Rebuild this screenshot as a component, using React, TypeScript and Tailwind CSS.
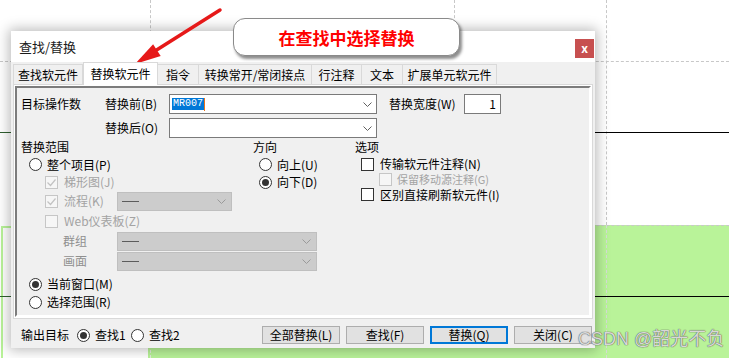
import React from 'react';

const Radio = ({ checked = false }: { checked?: boolean }) => (
  <span className="flex h-[13px] w-[13px] shrink-0 items-center justify-center rounded-full border border-[#333333] bg-white">
    {checked && <span className="h-[7px] w-[7px] rounded-full bg-[#333333]" />}
  </span>
);

const Check = ({ checked = false, disabled = false }: { checked?: boolean; disabled?: boolean }) => (
  <span
    className={`flex h-[13px] w-[13px] shrink-0 items-center justify-center border ${
      disabled ? 'border-[#c6c6c6] bg-[#f6f6f6]' : 'border-[#333333] bg-white'
    }`}
  >
    {checked && (
      <svg width="11" height="11" viewBox="0 0 11 11">
        <polyline points="1.5,5.5 4.5,8.5 9.5,2.5" fill="none" stroke={disabled ? '#c2c2c2' : '#333'} strokeWidth="1.2" />
      </svg>
    )}
  </span>
);

const Chevron = ({ color }: { color: string }) => (
  <svg width="9" height="5" viewBox="0 0 9 5">
    <polyline points="0.5,0.5 4.5,4.5 8.5,0.5" fill="none" stroke={color} strokeWidth="1" />
  </svg>
);

const Combo = ({ children }: { children?: React.ReactNode }) => (
  <div className="flex h-[20px] w-[208px] shrink-0 items-center justify-between border border-[#7a7a7a] bg-white pl-[2px] pr-[4px]">
    <div className="flex items-center">{children}</div>
    <Chevron color="#606060" />
  </div>
);

const DisabledSelect = ({ wide = false }: { wide?: boolean }) => (
  <div
    className={`flex h-[19px] shrink-0 items-center justify-between border border-[#bfbfbf] bg-[#cccccc] pl-[4px] pr-[5px] ${
      wide ? 'w-[200px]' : 'w-[115px]'
    }`}
  >
    <span className="h-[1px] w-[17px] bg-[#5c5c5c]" />
    <Chevron color="#9a9a9a" />
  </div>
);

const tabs = [
  { label: '查找软元件', w: 'w-[70px]' },
  { label: '替换软元件', w: 'w-[75px]', active: true },
  { label: '指令', w: 'w-[41px]' },
  { label: '转换常开/常闭接点', w: 'w-[113px]' },
  { label: '行注释', w: 'w-[50px]' },
  { label: '文本', w: 'w-[41px]' },
  { label: '扩展单元软元件', w: 'w-[94px]' },
];

const Button = ({ label, focused = false }: { label: string; focused?: boolean }) => (
  <div
    className={`flex h-[18px] w-[78px] items-center justify-center bg-[#e1e1e1] ${
      focused ? 'border-2 border-[#0078d7]' : 'border border-[#adadad]'
    }`}
  >
    {label}
  </div>
);

const App: React.FC = () => {
  return (
    <div className="relative h-[358px] w-[729px] overflow-hidden bg-white font-['Noto_Sans_CJK_SC',sans-serif] text-[12px] leading-none text-black">
      {/* canvas behind the dialog */}
      <div className="absolute left-[148px] top-[225px] h-[133px] w-[581px] border-t border-dashed border-[#c8c8c8] bg-[#b9f399]" />
      <div className="absolute left-[1px] top-[226px] h-[140px] w-[147px] border-l-2 border-t-2 border-[#b9f399]" />
      <div className="absolute left-0 top-[61px] w-[729px] border-t border-dashed border-[#c8c8c8]" />
      <div className="absolute left-[150px] top-0 h-[225px] border-l border-dashed border-[#c8c8c8]" />
      <div className="absolute left-[150px] top-[225px] h-[133px] border-l border-dashed border-[#e2ecdc]" />
      <div className="absolute left-[454px] top-0 h-[225px] border-l border-dashed border-[#c8c8c8]" />
      <div className="absolute left-[606px] top-0 h-[225px] border-l border-dashed border-[#c8c8c8]" />
      <div className="absolute left-[606px] top-[225px] h-[133px] border-l border-dashed border-[#d6dcd6]" />
      <div className="absolute left-0 top-[132px] h-[1px] w-[12px] bg-[#2f5f2f]" />
      <div className="absolute left-[594px] top-[132px] h-[1px] w-[135px] bg-black" />
      <div className="absolute left-0 top-[296px] h-[1px] w-[12px] bg-[#2f5f2f]" />
      <div className="absolute left-[594px] top-[296px] h-[1px] w-[135px] bg-black" />

      {/* dialog */}
      <div className="absolute left-[11px] top-[31px] flex h-[317px] w-[584px] flex-col bg-[#f0f0f0] shadow-[0_0_12px_2px_rgba(0,0,0,0.28)]">
        {/* title bar */}
        <div className="flex h-[31px] shrink-0 justify-between bg-white">
          <div className="flex items-center pl-[8px] text-[13px] text-[#1a1a1a]">查找/替换</div>
          <div className="mr-[1px] mt-[8px] flex h-[19px] w-[19px] items-center justify-center bg-[#c75050] pb-[2px] text-[12px] font-bold text-white">
            x
          </div>
        </div>

        {/* tab strip */}
        <div className="relative z-10 flex h-[22px] shrink-0 items-end pl-[2px]">
          {tabs.map((t) =>
            t.active ? (
              <div
                key={t.label}
                className={`-mb-[1px] flex h-[23px] items-center justify-center border border-b-0 border-[#d9d9d9] bg-white ${t.w}`}
              >
                {t.label}
              </div>
            ) : (
              <div
                key={t.label}
                className={`flex h-[20px] items-center justify-center border border-b-0 border-l-0 border-[#d9d9d9] bg-[#f0f0f0] first:border-l ${t.w}`}
              >
                {t.label}
              </div>
            )
          )}
        </div>

        {/* tab page */}
        <div className="mx-[2px] flex h-[235px] shrink-0 border border-[#d9d9d9] bg-white p-[1px]">
          <div className="flex flex-1 flex-col border-b-2 border-l-2 border-r-2 border-t-2 border-b-white border-l-[#7c7c7c] border-r-white border-t-[#7c7c7c] bg-[#f0f0f0] pl-[4px] pt-[6px]">
            {/* row 1 */}
            <div className="flex h-[20px] items-center">
              <span className="w-[84px] shrink-0">目标操作数</span>
              <span className="w-[64px] shrink-0">替换前(B)</span>
              <Combo>
                <span className="relative flex h-[12px] items-center bg-[#0078d7] px-[1px] font-['Liberation_Mono',monospace] text-[10px] text-white">
                  MR007
                </span>
                <span className="h-[13px] w-[1px] bg-[#e8731a]" />
              </Combo>
              <span className="ml-[12px] w-[75px] shrink-0">替换宽度(W)</span>
              <div className="flex h-[20px] w-[37px] items-center justify-end border border-[#7a7a7a] bg-white pr-[4px]">1</div>
            </div>
            {/* row 2 */}
            <div className="mt-[4px] flex h-[20px] items-center">
              <span className="w-[84px] shrink-0" />
              <span className="w-[64px] shrink-0">替换后(O)</span>
              <Combo />
            </div>

            <div className="flex">
              {/* replace range */}
              <div className="flex w-[232px] shrink-0 flex-col">
                <div className="flex h-[18px] items-center">替换范围</div>
                <div className="flex h-[17px] items-center gap-[5px] pl-[8px]">
                  <Radio />
                  <span>整个项目(P)</span>
                </div>
                <div className="flex h-[18px] items-center gap-[6px] pl-[24px] text-[#a3a3a3]">
                  <Check checked disabled />
                  <span>梯形图(J)</span>
                </div>
                <div className="flex h-[20px] items-center pl-[24px] text-[#a3a3a3]">
                  <div className="flex w-[72px] shrink-0 items-center gap-[6px]">
                    <Check checked disabled />
                    <span>流程(K)</span>
                  </div>
                  <DisabledSelect />
                </div>
                <div className="flex h-[20px] items-center gap-[6px] pl-[24px] text-[#a3a3a3]">
                  <Check disabled />
                  <span>Web仪表板(Z)</span>
                </div>
                <div className="flex h-[20px] items-center pl-[42px] text-[#8f8f8f]">
                  <span className="w-[54px] shrink-0">群组</span>
                  <DisabledSelect wide />
                </div>
                <div className="flex h-[20px] items-center pl-[42px] text-[#8f8f8f]">
                  <span className="w-[54px] shrink-0">画面</span>
                  <DisabledSelect wide />
                </div>
                <div className="mt-[4px] flex h-[18px] items-center gap-[5px] pl-[8px]">
                  <Radio checked />
                  <span>当前窗口(M)</span>
                </div>
                <div className="flex h-[18px] items-center gap-[5px] pl-[8px]">
                  <Radio />
                  <span>选择范围(R)</span>
                </div>
              </div>

              {/* direction */}
              <div className="flex w-[102px] shrink-0 flex-col">
                <div className="flex h-[18px] items-center">方向</div>
                <div className="flex h-[17px] items-center gap-[5px] pl-[6px]">
                  <Radio />
                  <span>向上(U)</span>
                </div>
                <div className="flex h-[18px] items-center gap-[5px] pl-[6px]">
                  <Radio checked />
                  <span>向下(D)</span>
                </div>
              </div>

              {/* options */}
              <div className="flex flex-col">
                <div className="flex h-[18px] items-center">选项</div>
                <div className="flex h-[16px] items-center gap-[6px] pl-[6px]">
                  <Check />
                  <span>传输软元件注释(N)</span>
                </div>
                <div className="flex h-[15px] items-center gap-[5px] pl-[24px] text-[#a3a3a3]">
                  <Check disabled />
                  <span className="text-[11px]">保留移动源注释(G)</span>
                </div>
                <div className="flex h-[15px] items-center gap-[6px] pl-[6px]">
                  <Check />
                  <span>区别直接刷新软元件(I)</span>
                </div>
              </div>
            </div>
          </div>
        </div>

        {/* bottom bar */}
        <div className="flex flex-1 items-start pl-[10px] pr-[3px] pt-[7px]">
          <div className="flex h-[18px] items-center">
            <span className="w-[56px]">输出目标</span>
            <Radio checked />
            <span className="ml-[5px] w-[36px]">查找1</span>
            <Radio />
            <span className="ml-[5px]">查找2</span>
          </div>
          <div className="ml-auto flex gap-[6px]">
            <Button label="全部替换(L)" />
            <Button label="查找(F)" />
            <Button label="替换(Q)" focused />
            <Button label="关闭(C)" />
          </div>
        </div>
      </div>

      {/* annotation callout */}
      <div className="absolute left-[233px] top-[18px] flex h-[38px] w-[227px] items-center justify-center rounded-[12px] border border-[#8a8a8a] bg-white shadow-[2px_3px_3px_rgba(0,0,0,0.45)]">
        <span className="text-[17px] font-bold text-[#ff0000]">在查找中选择替换</span>
      </div>

      {/* annotation arrow */}
      <svg className="absolute left-0 top-0" width="729" height="358" viewBox="0 0 729 358">
        <line x1="220" y1="10" x2="155" y2="51" stroke="#e61919" strokeWidth="3.5" strokeLinecap="round" />
        <polygon points="135,64 160.7,56 153.1,44.2" fill="#e61919" />
      </svg>

      {/* watermark */}
      <div className="absolute left-[578px] top-[330px] font-['Liberation_Sans','Noto_Sans_CJK_SC',sans-serif] text-[18px] leading-none text-[rgba(240,240,240,0.85)] [text-shadow:0_0_1px_#555555,0_0_1px_#555555]">
        CSDN @韶光不负
      </div>
    </div>
  );
};

export default App;
